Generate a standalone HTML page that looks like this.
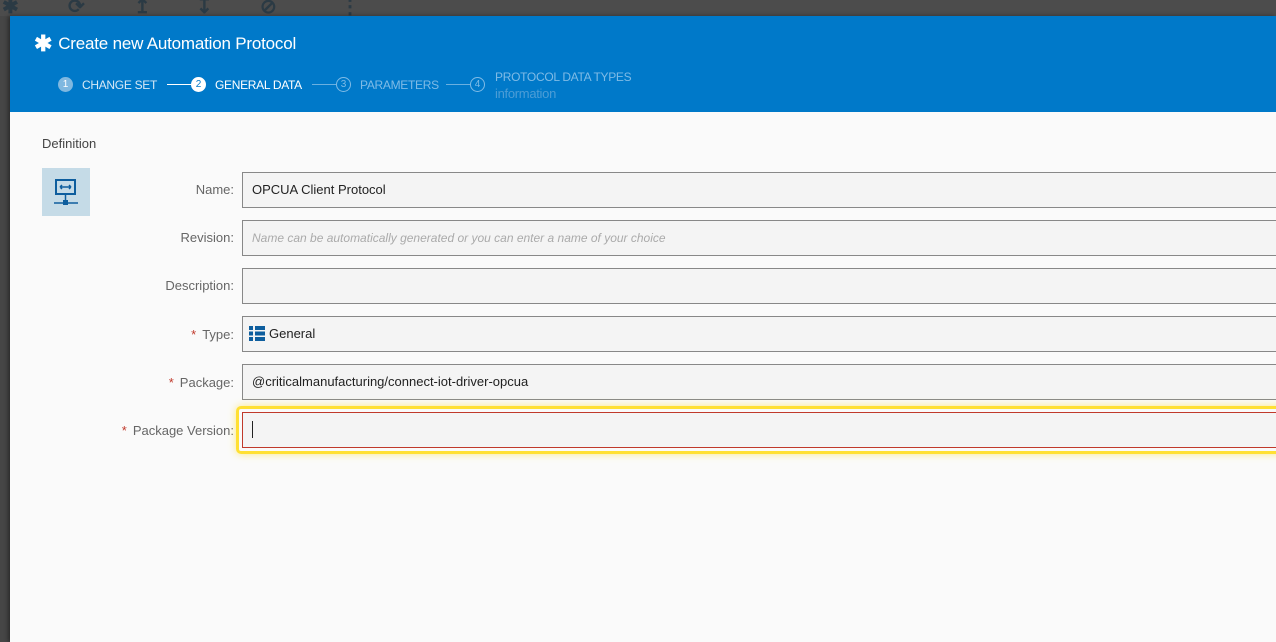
<!DOCTYPE html>
<html><head><meta charset="utf-8"><style>
*{box-sizing:border-box;margin:0;padding:0}
body{width:1276px;height:642px;overflow:hidden;background:#464646;font-family:"Liberation Sans",sans-serif;position:relative}
.tb{position:absolute;top:0;left:0;width:1276px;height:16px;background:#4c4c4c}
.tb span{position:absolute;top:-6px;color:#2b3a44;font-size:20px;font-weight:bold}
.modal{position:absolute;left:10px;top:16px;width:1266px;height:626px;background:#fafafa;box-shadow:-2px 0 4px rgba(0,0,0,.4)}
.hdr{height:96px;background:#0079c9;color:#fff;position:relative}
.title{position:absolute;left:24px;top:15px;font-size:17px;letter-spacing:-0.2px}
.title b{font-size:22px;margin-right:6px;vertical-align:-2px}
.a{position:absolute;font-size:12px;white-space:nowrap;letter-spacing:-0.3px}
.c{position:absolute;width:15px;height:15px;border-radius:50%;font-size:10px;display:flex;align-items:center;justify-content:center}
.line{position:absolute;top:68px;height:1px}
.sec{position:absolute;left:32px;top:120px;font-size:13px;color:#444}
.ico{position:absolute;left:32px;top:152px;width:48px;height:48px;background:#c5dbe7}
.lbl{position:absolute;right:1042px;font-size:13px;color:#666;text-align:right;white-space:nowrap}
.lbl i{color:#c0392b;font-style:normal;margin-right:6px}
.inp{position:absolute;left:232px;width:1040px;height:36px;background:#f4f4f4;border:1px solid #888;font-size:13px;color:#222;padding:0 9px;line-height:34px}
</style></head><body>
<div class="tb"><span style="left:2px">✱</span><span style="left:68px">⟳</span><span style="left:134px">↥</span><span style="left:196px">↧</span><span style="left:260px">⊘</span><span style="left:340px">⋮</span></div>
<div class="modal">
<div class="hdr">
<div class="title"><b>✱</b>Create new Automation Protocol</div>
<span class="c" style="left:48px;top:61px;background:#7fb8e0;color:#fff">1</span>
<div class="a" style="left:72px;top:62px;color:#d6e8f5">CHANGE SET</div>
<div class="line" style="left:157px;width:25px;background:#fff"></div>
<span class="c" style="left:181px;top:61px;background:#fff;color:#0079c9">2</span>
<div class="a" style="left:205px;top:62px;color:#fff">GENERAL DATA</div>
<div class="line" style="left:302px;width:24px;background:#6ab0e0"></div>
<span class="c" style="left:326px;top:61px;border:1px solid #7fbbe6;color:#7fbbe6">3</span>
<div class="a" style="left:350px;top:62px;color:#7fbbe6">PARAMETERS</div>
<div class="line" style="left:436px;width:24px;background:#6ab0e0"></div>
<span class="c" style="left:460px;top:61px;border:1px solid #7fbbe6;color:#7fbbe6">4</span>
<div class="a" style="left:485px;top:54px;color:#7fbbe6">PROTOCOL DATA TYPES</div>
<div class="a" style="left:485px;top:70px;color:#4c9dd6;font-size:13px">information</div>
</div>
<div class="sec">Definition</div>
<div class="ico"><svg width="48" height="48" viewBox="0 0 48 48"><rect x="14" y="12" width="19" height="14" fill="none" stroke="#0e5e9e" stroke-width="2"/><path d="M18 19h11M18 19l2-2M18 19l2 2M29 19l-2-2M29 19l-2 2" stroke="#0e5e9e" stroke-width="1.5" fill="none"/><path d="M23.5 26v7M12 35h24" stroke="#0e5e9e" stroke-width="1.5"/><rect x="21" y="32" width="5" height="5" fill="#0e5e9e"/></svg></div>
<div class="lbl" style="top:166px">Name:</div>
<div class="inp" style="top:156px">OPCUA Client Protocol</div>
<div class="lbl" style="top:214px">Revision:</div>
<div class="inp" style="top:204px;color:#aaa;font-style:italic;font-size:12px">Name can be automatically generated or you can enter a name of your choice</div>
<div class="lbl" style="top:262px">Description:</div>
<div class="inp" style="top:252px"></div>
<div class="lbl" style="top:311px"><i>*</i>Type:</div>
<div class="inp" style="top:300px;padding-left:6px"><svg width="16" height="15" style="vertical-align:-3px;margin-right:4px"><rect x="0" y="0" width="4" height="4" fill="#0e5e9e"/><rect x="6" y="0" width="10" height="4" fill="#0e5e9e"/><rect x="0" y="5.5" width="4" height="4" fill="#0e5e9e"/><rect x="6" y="5.5" width="10" height="4" fill="#0e5e9e"/><rect x="0" y="11" width="4" height="4" fill="#0e5e9e"/><rect x="6" y="11" width="10" height="4" fill="#0e5e9e"/></svg>General</div>
<div class="lbl" style="top:359px"><i>*</i>Package:</div>
<div class="inp" style="top:348px">@criticalmanufacturing/connect-iot-driver-opcua</div>
<div class="lbl" style="top:407px"><i>*</i>Package Version:</div>
<div style="position:absolute;left:226px;top:390px;width:1060px;height:48px;border:3px solid #ffe033;border-radius:5px;box-shadow:0 0 8px rgba(255,224,51,.6)"></div>
<div class="inp" style="top:396px;border-color:#c0392b"><span style="display:inline-block;width:1px;height:17px;background:#222;vertical-align:-4px"></span></div>
</div>
</body></html>
